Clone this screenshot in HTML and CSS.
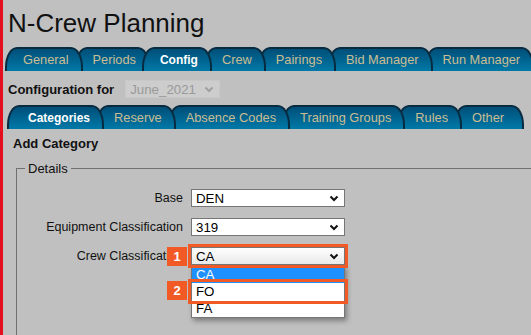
FILE: index.html
```html
<!DOCTYPE html>
<html lang="en">
<head>
  <meta charset="UTF-8">
  <meta name="viewport" content="width=device-width, initial-scale=1.0">
  <title>N-Crew Planning</title>
  <link rel="stylesheet" href="styles.css">
</head>
<body>
  <div class="page">
    <h1 class="title">N-Crew Planning</h1>

    <ul class="tabs main-tabs">
      <li>General</li>
      <li>Periods</li>
      <li class="active">Config</li>
      <li>Crew</li>
      <li>Pairings</li>
      <li>Bid Manager</li>
      <li>Run Manager</li>
    </ul>

    <div class="config-row">
      <span class="config-label">Configuration for</span>
      <div class="select disabled">
        <span>June_2021</span>
        <svg class="chevron" width="10" height="7" viewBox="0 0 10 7"><path d="M1.5 1.5 L5 5 L8.5 1.5" fill="none" stroke="currentColor" stroke-width="2"/></svg>
      </div>
    </div>

    <ul class="tabs sub-tabs">
      <li class="active">Categories</li>
      <li>Reserve</li>
      <li>Absence Codes</li>
      <li>Training Groups</li>
      <li>Rules</li>
      <li>Other</li>
    </ul>

    <h2 class="section-title">Add Category</h2>

    <fieldset class="details">
      <legend>Details</legend>
      <div class="form">
        <label>Base</label>
        <div class="select">
          <span>DEN</span>
          <svg class="chevron" width="10" height="7" viewBox="0 0 10 7"><path d="M1.5 1.5 L5 5 L8.5 1.5" fill="none" stroke="currentColor" stroke-width="2"/></svg>
        </div>

        <label>Equipment Classification</label>
        <div class="select">
          <span>319</span>
          <svg class="chevron" width="10" height="7" viewBox="0 0 10 7"><path d="M1.5 1.5 L5 5 L8.5 1.5" fill="none" stroke="currentColor" stroke-width="2"/></svg>
        </div>

        <label>Crew Classification</label>
        <div class="crew-field">
          <div class="select open">
            <span>CA</span>
            <svg class="chevron" width="10" height="7" viewBox="0 0 10 7"><path d="M1.5 1.5 L5 5 L8.5 1.5" fill="none" stroke="currentColor" stroke-width="2"/></svg>
          </div>
          <ul class="dropdown">
            <li class="selected">CA</li>
            <li class="marked">FO</li>
            <li>FA</li>
          </ul>
          <span class="badge badge-1">1</span>
          <span class="badge badge-2">2</span>
        </div>
      </div>
    </fieldset>
  </div>
</body>
</html>
```

FILE: styles.css
```css
html, body {
  height: 100%;
}
body {
  margin: 0;
  background: #c0c0c0;
  border-left: 3px solid #e30f1f;
  font-family: "Liberation Sans", Arial, sans-serif;
  color: #111;
  overflow: hidden;
}
.page {
  padding: 8px 0 0 5px;
}
.title {
  margin: 0;
  font-size: 26px;
  line-height: 30px;
  font-weight: normal;
  color: #111;
}

/* tabs */
.tabs {
  list-style: none;
  margin: 9px 0 0 -3px;
  padding: 0;
  display: flex;
  white-space: nowrap;
}
.tabs li {
  position: relative;
  flex-shrink: 0;
  height: 22px;
  line-height: 22px;
  padding: 0 12px 0 16px;
  margin-right: -8px;
  font-size: 12.8px;
  color: #cbbd93;
  background: linear-gradient(#004f78, #0079a8);
  border: 2px solid #082b40;
  border-bottom: none;
  border-radius: 12px 12px 0 0 / 20px 20px 0 0;
}
.tabs li:nth-child(1) { z-index: 9; }
.tabs li:nth-child(2) { z-index: 8; }
.tabs li:nth-child(3) { z-index: 7; }
.tabs li:nth-child(4) { z-index: 6; }
.tabs li:nth-child(5) { z-index: 5; }
.tabs li:nth-child(6) { z-index: 4; }
.tabs li:nth-child(7) { z-index: 3; }
.tabs li.active {
  z-index: 20;
  color: #fff;
  font-weight: bold;
  font-size: 12px;
}
.sub-tabs {
  margin-top: 7px;
  margin-left: -1px;
}
.sub-tabs li:first-child {
  padding-left: 19px;
}
.sub-tabs li:last-child {
  padding-right: 18px;
}

/* config selector */
.config-row {
  display: flex;
  align-items: center;
  gap: 11px;
  height: 18px;
  margin-top: 9px;
}
.config-label {
  font-size: 13px;
  font-weight: bold;
}

.select {
  box-sizing: border-box;
  display: flex;
  align-items: center;
  justify-content: space-between;
  width: 154px;
  height: 18px;
  padding: 0 5px 0 4px;
  background: #fff;
  border: 1px solid #767676;
  font-size: 13.3px;
  color: #000;
}
.select .chevron {
  color: #111;
}
.select.disabled {
  width: 95px;
  background: #cdcdcd;
  border-color: #c8c8c8;
  color: #9a9a9a;
}
.select.disabled .chevron {
  color: #a0a0a0;
}
.select.open {
  position: relative;
  z-index: 6;
  background: linear-gradient(#fff, #e9e9e9);
  outline: 3px solid #f15a24;
}

.section-title {
  margin: 7px 0 0 5px;
  font-size: 13px;
  line-height: 16px;
  font-weight: bold;
}

/* details box */
.details {
  width: 700px;
  margin: 9px 0 0 8px;
  padding: 0;
  border: 1px solid #707070;
  min-width: 0;
}
.details legend {
  margin-left: 8px;
  padding: 0 3px;
  font-size: 13px;
  line-height: 15px;
}
.form {
  display: grid;
  grid-template-columns: 166px 154px;
  column-gap: 8px;
  row-gap: 11px;
  padding: 13px 0 120px;
}
.form label {
  align-self: center;
  text-align: right;
  font-size: 12.5px;
  color: #111;
}

.crew-field {
  position: relative;
  height: 18px;
}
.dropdown {
  position: absolute;
  top: 18px;
  left: 0;
  z-index: 5;
  box-sizing: border-box;
  width: 154px;
  margin: 0;
  padding: 0;
  list-style: none;
  background: #fff;
  border: 1px solid #767676;
  box-shadow: 2px 3px 5px rgba(0, 0, 0, 0.35);
}
.dropdown li {
  height: 17px;
  line-height: 17px;
  padding-left: 4px;
  font-size: 13.3px;
  color: #000;
}
.dropdown li.selected {
  background: #1e90ff;
  color: #fff;
}
.dropdown li.marked {
  outline: 3px solid #f15a24;
  outline-offset: 1px;
}

.badge {
  position: absolute;
  left: -24px;
  z-index: 7;
  width: 20px;
  height: 19px;
  line-height: 19px;
  text-align: center;
  background: #f15a24;
  color: #fff;
  font-size: 13px;
  font-weight: bold;
}
.badge-1 {
  top: 0;
}
.badge-2 {
  top: 34px;
}
```
